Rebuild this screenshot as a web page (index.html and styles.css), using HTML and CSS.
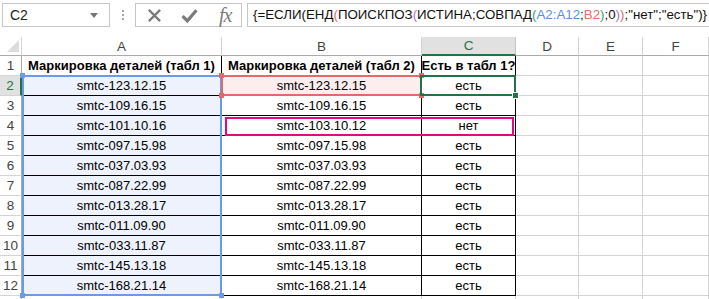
FILE: index.html
```html
<!DOCTYPE html>
<html lang="ru">

<head>
    <meta charset="UTF-8">
    <title>Сравнение маркировки</title>
    <link rel="stylesheet" href="styles.css">
</head>

<body>
    <div class="toolbar">
        <div class="name-box">
            <span>C2</span>
            <svg class="drop" viewBox="0 0 8 5"><path d="M0 0h8L4 5z"></path></svg>
        </div>
        <div class="grip"><i></i><i></i><i></i></div>
        <div class="fx-box">
            <svg class="icon" viewBox="0 0 16 16">
                <path d="M2 2L14 14M14 2L2 14"></path>
            </svg>
            <svg class="icon" viewBox="0 0 16 16">
                <path d="M1.5 8.5L6 13L14.5 3"></path>
            </svg>
            <span class="fx">fx</span>
        </div>
        <div class="formula">{=ЕСЛИ(ЕНД<span class="p-red">(</span>ПОИСКПОЗ<span class="p-purple">(</span>ИСТИНА;СОВПАД<span class="p-green">(</span><span class="ref-blue">A2:A12</span>;<span class="ref-red">B2</span><span class="p-green">)</span>;0<span class="p-purple">)</span><span class="p-red">)</span>;"нет";"есть")}</div>
    </div>

    <div class="sheet">
        <div class="grid">
            <div class="corner"><svg viewBox="0 0 12 12"><path d="M12 0V12H0z"></path></svg></div>
            <div class="col-head">A</div>
            <div class="col-head">B</div>
            <div class="col-head active">C</div>
            <div class="col-head">D</div>
            <div class="col-head">E</div>
            <div class="col-head">F</div>

            <div class="row-head">1</div>
            <div class="cell t th">Маркировка деталей (табл 1)</div>
            <div class="cell t th">Маркировка деталей (табл 2)</div>
            <div class="cell t th">Есть в табл 1?</div>
            <div class="cell"></div><div class="cell"></div><div class="cell"></div>

            <div class="row-head active">2</div>
            <div class="cell t in-blue">smtc-123.12.15</div>
            <div class="cell t in-red">smtc-123.12.15</div>
            <div class="cell t">есть</div>
            <div class="cell"></div><div class="cell"></div><div class="cell"></div>

            <div class="row-head">3</div>
            <div class="cell t in-blue">smtc-109.16.15</div>
            <div class="cell t">smtc-109.16.15</div>
            <div class="cell t">есть</div>
            <div class="cell"></div><div class="cell"></div><div class="cell"></div>

            <div class="row-head">4</div>
            <div class="cell t in-blue">smtc-101.10.16</div>
            <div class="cell t">smtc-103.10.12</div>
            <div class="cell t">нет</div>
            <div class="cell"></div><div class="cell"></div><div class="cell"></div>

            <div class="row-head">5</div>
            <div class="cell t in-blue">smtc-097.15.98</div>
            <div class="cell t">smtc-097.15.98</div>
            <div class="cell t">есть</div>
            <div class="cell"></div><div class="cell"></div><div class="cell"></div>

            <div class="row-head">6</div>
            <div class="cell t in-blue">smtc-037.03.93</div>
            <div class="cell t">smtc-037.03.93</div>
            <div class="cell t">есть</div>
            <div class="cell"></div><div class="cell"></div><div class="cell"></div>

            <div class="row-head">7</div>
            <div class="cell t in-blue">smtc-087.22.99</div>
            <div class="cell t">smtc-087.22.99</div>
            <div class="cell t">есть</div>
            <div class="cell"></div><div class="cell"></div><div class="cell"></div>

            <div class="row-head">8</div>
            <div class="cell t in-blue">smtc-013.28.17</div>
            <div class="cell t">smtc-013.28.17</div>
            <div class="cell t">есть</div>
            <div class="cell"></div><div class="cell"></div><div class="cell"></div>

            <div class="row-head">9</div>
            <div class="cell t in-blue">smtc-011.09.90</div>
            <div class="cell t">smtc-011.09.90</div>
            <div class="cell t">есть</div>
            <div class="cell"></div><div class="cell"></div><div class="cell"></div>

            <div class="row-head">10</div>
            <div class="cell t in-blue">smtc-033.11.87</div>
            <div class="cell t">smtc-033.11.87</div>
            <div class="cell t">есть</div>
            <div class="cell"></div><div class="cell"></div><div class="cell"></div>

            <div class="row-head">11</div>
            <div class="cell t in-blue">smtc-145.13.18</div>
            <div class="cell t">smtc-145.13.18</div>
            <div class="cell t">есть</div>
            <div class="cell"></div><div class="cell"></div><div class="cell"></div>

            <div class="row-head">12</div>
            <div class="cell t in-blue">smtc-168.21.14</div>
            <div class="cell t">smtc-168.21.14</div>
            <div class="cell t">есть</div>
            <div class="cell"></div><div class="cell"></div><div class="cell"></div>

            <div class="row-head"></div>
            <div class="cell"></div><div class="cell"></div><div class="cell"></div>
            <div class="cell"></div><div class="cell"></div><div class="cell"></div>
        </div>

        <!-- highlights drawn over the cells, on a grid of the same shape -->
        <div class="grid layer">
            <div class="range range-blue">
                <span class="dot tl"></span><span class="dot tr"></span>
                <span class="dot bl"></span><span class="dot br"></span>
            </div>
            <div class="range range-red">
                <span class="dot tl"></span><span class="dot tr"></span>
                <span class="dot bl"></span><span class="dot br"></span>
            </div>
            <div class="range range-active">
                <span class="handle"></span>
            </div>
            <div class="mark"></div>
        </div>
    </div>
</body>

</html>
```

FILE: styles.css
```css
body {
    margin: 0;
    padding: 0;
    background: #fff;
    font-family: "Liberation Sans", Arial, sans-serif;
    color: #000;
    height: 299px;
    overflow: hidden;
}

/* formula bar */

.toolbar {
    display: flex;
    align-items: flex-start;
    height: 37px;
    padding-top: 3px;
    box-sizing: border-box;
}

.name-box {
    width: 108px;
    height: 24px;
    margin-left: 2px;
    border: 1px solid #c6c6c6;
    box-sizing: border-box;
    display: flex;
    align-items: center;
    justify-content: space-between;
    padding: 0 11px 0 7px;
    font-size: 14px;
    color: #222;
}

.drop {
    width: 8px;
    height: 5px;
    fill: #777;
}

.grip {
    width: 25px;
    height: 24px;
    display: flex;
    flex-direction: column;
    align-items: center;
    justify-content: center;
    gap: 2px;
}

.grip i {
    display: block;
    width: 2px;
    height: 2px;
    background: #a6a6a6;
}

.fx-box {
    width: 107px;
    height: 24px;
    border: 1px solid #c6c6c6;
    box-sizing: border-box;
    display: flex;
    align-items: center;
    padding-left: 11px;
    gap: 20px;
}

.icon {
    width: 15px;
    height: 15px;
    fill: none;
    stroke: #7b7b7b;
    stroke-width: 2.4;
}

.icon + .icon {
    width: 17px;
    height: 17px;
    stroke-width: 3;
    margin-left: -1px;
}

.fx {
    font-family: "Liberation Serif", "Times New Roman", serif;
    font-style: italic;
    font-size: 20px;
    color: #7b7b7b;
    margin-left: 1px;
    letter-spacing: -1px;
}

.formula {
    flex: 1;
    height: 24px;
    margin-left: 5px;
    margin-right: -2px;
    border: 1px solid #c6c6c6;
    box-sizing: border-box;
    padding-left: 5px;
    font-size: 13.3px;
    line-height: 22px;
    white-space: nowrap;
    overflow: hidden;
    color: #111;
}

.p-red { color: #e36c6c; }
.p-purple { color: #a872c5; }
.p-green { color: #3aa36a; }
.ref-blue { color: #5b8ee0; }
.ref-red { color: #e36c6c; }

/* sheet grid */

.sheet {
    display: grid;
}

.grid {
    grid-area: 1 / 1;
    display: grid;
    grid-template-columns: 22px 200px 200px 94px 63px 64px 1fr;
    grid-template-rows: 19px repeat(13, 20px);
    font-size: 13px;
}

.layer {
    z-index: 2;
    pointer-events: none;
}

.corner {
    border-right: 1px solid #d4d4d4;
    border-bottom: 1px solid #ababab;
    display: flex;
    align-items: flex-end;
    justify-content: flex-end;
    padding: 0 2px 3px 0;
}

.corner svg {
    width: 12px;
    height: 12px;
    fill: #dcdcdc;
}

.col-head {
    border-right: 1px solid #d4d4d4;
    border-bottom: 1px solid #ababab;
    display: flex;
    align-items: center;
    justify-content: center;
    font-size: 13.5px;
    color: #444;
}

.col-head.active {
    background: #e1e1e1;
    color: #217346;
    border-bottom: 2px solid #217346;
    border-right-color: #c6c6c6;
}

.row-head {
    border-right: 1px solid #ababab;
    border-bottom: 1px solid #d4d4d4;
    display: flex;
    align-items: center;
    justify-content: center;
    font-size: 13.5px;
    color: #444;
}

.row-head.active {
    background: #e1e1e1;
    color: #217346;
    border-right: 2px solid #217346;
}

.cell {
    border-right: 1px solid #d4d4d4;
    border-bottom: 1px solid #d4d4d4;
    display: flex;
    align-items: center;
    justify-content: center;
    white-space: nowrap;
}

.cell.t {
    border-right-color: #000;
    border-bottom-color: #000;
}

.cell.th {
    font-weight: bold;
}

.in-blue {
    background: #edf2fc;
}

.in-red {
    background: #fdeeee;
}

/* selections and reference frames */

.range {
    position: relative;
    border: 2px solid;
    margin: -1px 0 0 -1px;
}

.range-blue {
    grid-column: 2;
    grid-row: 3 / span 11;
    border-color: #6b9be6;
    margin-left: 0;
}

.range-red {
    grid-column: 3;
    grid-row: 3;
    border-color: #e36a6a;
}

.range-active {
    grid-column: 4;
    grid-row: 3;
    border-color: #217346;
    margin-left: -2px;
}

.dot {
    position: absolute;
    width: 5px;
    height: 5px;
}

.range-blue .dot { background: #6b9be6; }
.range-red .dot { background: #e36a6a; }

.tl { top: -4px; left: -4px; }
.tr { top: -4px; right: -4px; }
.bl { bottom: -4px; left: -4px; }
.br { bottom: -4px; right: -4px; }

.handle {
    position: absolute;
    right: -5px;
    bottom: -5px;
    width: 5px;
    height: 5px;
    background: #217346;
    border: 1px solid #fff;
}

.mark {
    grid-column: 3 / span 2;
    grid-row: 5;
    border: 2px solid #e8067f;
    margin: 1px 2px 0 3px;
}
```
